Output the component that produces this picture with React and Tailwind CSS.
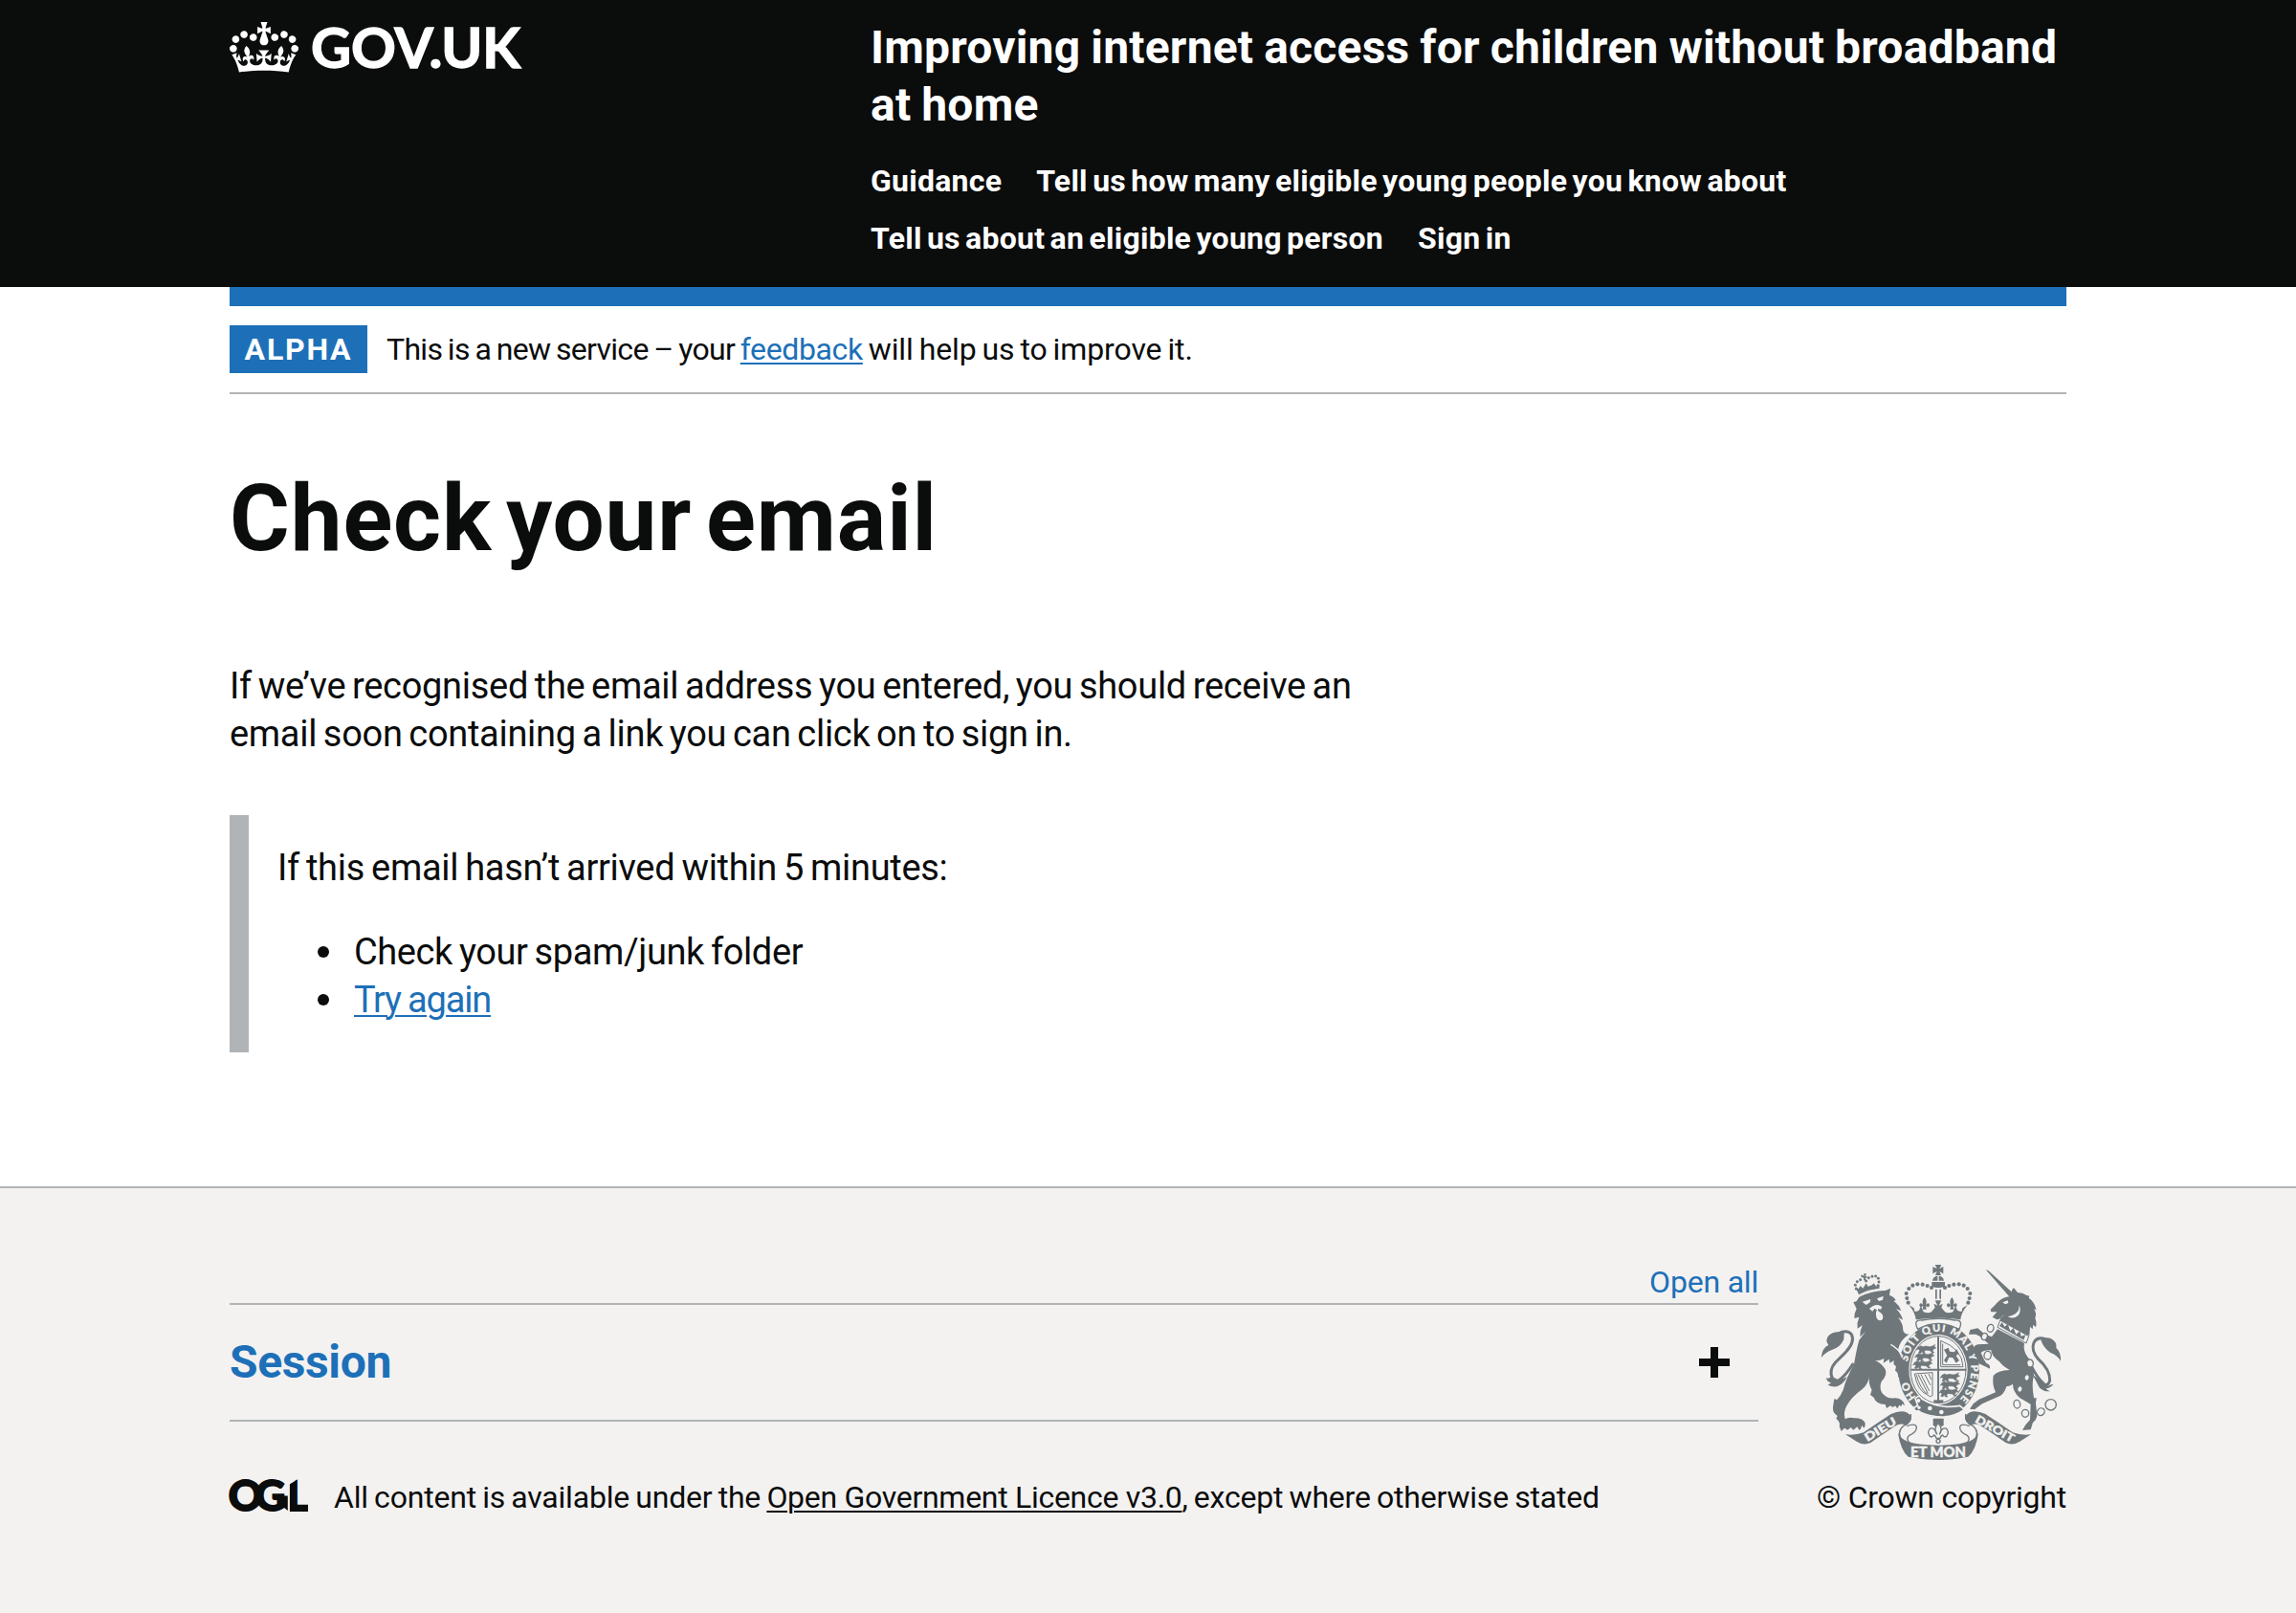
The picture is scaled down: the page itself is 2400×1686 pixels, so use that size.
import React from "react";

function Crown() {
  return (
    <svg viewBox="0 0 132 97" className="h-[53px] w-[72px] shrink-0" aria-hidden="true">
      <path
        fill="currentColor"
        fillRule="evenodd"
        d="M25 30.2c3.5 1.5 7.7-.2 9.1-3.7 1.5-3.6-.2-7.8-3.9-9.2-3.6-1.4-7.6.3-9.1 3.9-1.4 3.5.3 7.5 3.9 9zM9 39.5c3.6 1.5 7.8-.2 9.2-3.7 1.5-3.6-.2-7.8-3.9-9.1-3.6-1.5-7.6.2-9.1 3.8-1.4 3.5.3 7.5 3.8 9zM4.4 57.2c3.5 1.5 7.7-.2 9.1-3.8 1.5-3.6-.2-7.7-3.9-9.1-3.5-1.5-7.6.3-9.1 3.8-1.4 3.5.3 7.6 3.9 9.1zm38.3-21.4c3.5 1.5 7.7-.2 9.1-3.8 1.5-3.6-.2-7.7-3.9-9.1-3.6-1.5-7.6.3-9.1 3.8-1.3 3.6.4 7.7 3.9 9.1zm64.4-5.6c-3.6 1.5-7.8-.2-9.1-3.7-1.5-3.6.2-7.8 3.8-9.2 3.6-1.4 7.7.3 9.2 3.9 1.3 3.5-.4 7.5-3.9 9zm15.9 9.3c-3.6 1.5-7.7-.2-9.1-3.7-1.5-3.6.2-7.8 3.7-9.1 3.6-1.5 7.7.2 9.2 3.8 1.5 3.5-.3 7.5-3.8 9zm4.7 17.7c-3.6 1.5-7.8-.2-9.2-3.8-1.5-3.6.2-7.7 3.9-9.1 3.6-1.5 7.7.3 9.2 3.8 1.3 3.5-.4 7.6-3.9 9.1zM89.3 35.8c-3.6 1.5-7.8-.2-9.2-3.8-1.4-3.6.2-7.7 3.9-9.1 3.6-1.5 7.7.3 9.2 3.8 1.4 3.6-.3 7.7-3.9 9.1zM69.7 17.7l8.9 4.7V9.3l-8.9 2.8c-.2-.3-.5-.6-.9-.9L72.4 0H59.6l3.5 11.2c-.3.3-.6.5-.9.9l-8.8-2.8v13.1l8.8-4.7c.3.3.6.7.9.9l-5 15.4v.1c-.2.8-.4 1.6-.4 2.4 0 4.1 3.1 7.5 7 8.1h.2c.3 0 .7.1 1 .1.4 0 .7 0 1-.1h.2c4-.6 7.1-4.1 7.1-8.1 0-.8-.1-1.7-.4-2.4V34l-5.1-15.4c.4-.2.7-.6 1-.9zM66 92.8c16.9 0 32.8 1.1 47.1 3.2 4-16.9 8.9-26.7 14-33.5l-9.6-3.4c1 4.9 1.1 7.2 0 10.2-1.5-1.4-3-4.3-4.2-8.7L108.6 76c2.8-2 5-3.2 7.5-3.3-4.4 9.4-10 11.9-13.6 11.2-4.3-.8-6.3-4.6-5.6-7.9 1-4.7 5.7-5.9 8-.5 4.3-8.7-3-11.4-7.6-8.8 7.1-7.2 7.9-13.5 2.1-21.1-8 6.1-8.1 12.3-4.5 20.8-4.7-5.4-12.1-2.5-9.5 6.2 3.4-5.2 7.9-2 7.2 3.1-.6 4.3-6.4 7.8-13.5 7.2-10.3-.9-10.9-8-11.2-13.8 2.5-.5 7.1 1.8 11 7.3L80.2 60c-4.1 4.4-8 5.3-12.3 5.4 1.4-4.4 8-11.6 8-11.6H55.5s6.4 7.2 7.9 11.6c-4.2-.1-8-1-12.3-5.4l1.4 16.4c3.9-5.5 8.5-7.7 10.9-7.3-.3 5.8-.9 12.8-11.1 13.8-7.2.6-12.9-2.9-13.5-7.2-.7-5 3.8-8.3 7.1-3.1 2.7-8.7-4.6-11.6-9.4-6.2 3.7-8.5 3.6-14.7-4.6-20.8-5.8 7.6-5 13.9 2.2 21.1-4.7-2.6-11.9.1-7.7 8.8 2.3-5.5 7.1-4.2 8.1.5.7 3.3-1.3 7.1-5.7 7.9-3.5.7-9-1.8-13.5-11.2 2.5.1 4.7 1.3 7.5 3.3l-4.7-15.4c-1.2 4.4-2.7 7.2-4.3 8.7-1.1-3-.9-5.3 0-10.2l-9.5 3.4c5 6.9 9.9 16.7 14 33.5 14.8-2.1 30.8-3.2 47.7-3.2z"
      />
    </svg>
  );
}

function OglLogo() {
  return (
    <svg viewBox="0 0 82 34" className="mt-px h-[34px] w-[82px] shrink-0 overflow-visible" aria-label="OGL">
      <defs>
        <clipPath id="ogl-clip">
          <path d="M-1 -2H61.5V36H-1ZM62.8 5.6L71.8 -0.2V25H82V36H62.8Z" />
        </clipPath>
      </defs>
      <g fill="#0b0c0c">
        <text
          clipPath="url(#ogl-clip)"
          x="-1.2 26.6 60"
          y="33"
          stroke="#0b0c0c"
          strokeWidth="1.8"
          fontFamily="Lato, sans-serif"
          fontWeight="900"
          fontSize="44"
        >
          OGL
        </text>
        <path d="M47 17.5H60.8V33L56.5 29.5L52 30V24.5Z" />
      </g>
    </svg>
  );
}

const crownPearls = [
  [344, 185], [340, 171], [338, 156], [346, 141], [358, 131], [373, 127], [389, 128], [404, 132], [417, 138],
  [532, 185], [536, 171], [538, 156], [530, 141], [518, 131], [503, 127], [487, 128], [472, 132], [459, 138],
];
const lionPearls = [
  [181, 142], [178, 130], [184, 119], [194, 113], [220, 107], [231, 103], [242, 102], [250, 109], [252, 120], [249, 131], [212, 117],
];
const chainLinks = [
  [602, 265, 10, 12, 15], [583, 291, 9, 11, 20], [593, 350, 11, 13, 10], [726, 375, 10, 12, -10], [716, 420, 8, 10, 20],
  [694, 456, 8, 10, 20], [685, 503, 10, 13, -10], [711, 532, 11, 12, 0], [760, 527, 11, 12, 40], [791, 505, 17, 17, 0],
];

function HeraldicLion({ transform }) {
  return (
    <path
      transform={transform}
      d="M0 4l8-4 6 3 8-2 14 2 10-3 6-4-2 8 6 3-8 3-4 6 6 6-8-1-6-6-14-1-4 5 4 5-8 0-2-6-6 6-6-2 4-7-4-4-6 2z"
    />
  );
}

function Fleur({ transform }) {
  return <path transform={transform} d="M0-20Q10-8 4 4Q12-6 16 3Q16 11 8 11Q9 7 4 8L6 18H-6L-4 8Q-9 7-8 11Q-16 11-16 3Q-12-6-4 4Q-10-8 0-20Z" />;
}

function CoatOfArms() {
  const bg = "#f3f2f1";
  return (
    <svg viewBox="72 66 750 612" className="h-[204px] w-[250px] overflow-visible" fill="#6f777b" aria-hidden="true">
      {/* tails */}
      <g fill="none" stroke="#6f777b" strokeWidth="9" strokeLinecap="round">
        <path d="M124 282Q152 268 166 284Q178 308 148 340L116 372Q94 396 106 422Q114 436 126 428Q146 416 170 378" />
        <path d="M776 300Q748 290 738 310Q728 334 752 362Q790 396 788 430Q782 448 770 440Q750 424 728 380" />
      </g>
      <path d="M143 280Q112 270 94 289Q82 302 94 318Q74 326 71 358Q84 340 106 332Q130 326 142 300Z" />
      <path d="M104 416Q92 426 86 420Q90 434 102 436Q94 444 90 442Q112 454 128 444Q144 436 152 418L128 428Z" />
      <path d="M760 302Q780 288 796 300Q812 312 808 326Q824 342 822 368Q810 348 790 342Q768 326 760 302Z" />
      <path d="M760 430L782 446Q794 440 800 440Q790 452 776 454Q784 464 790 462Q772 466 756 452L734 410Z" />

      {/* garter and shield */}
      <ellipse cx="440" cy="397" rx="132" ry="152" fill={bg} />
      <ellipse cx="440" cy="397" rx="127" ry="147" />
      <ellipse cx="438" cy="395" rx="92" ry="110" fill={bg} />
      <ellipse cx="438" cy="395" rx="87" ry="105" fill="none" stroke="#6f777b" strokeWidth="3" />
      <path d="M435 292h6v206h-6zM352 392h174v6h-174z" />
      <path d="M424 490h30v8h-30z" />
      <g stroke="#6f777b" strokeWidth="1.5">
        <HeraldicLion transform="translate(376 320)" />
        <HeraldicLion transform="translate(370 344)" />
        <HeraldicLion transform="translate(364 368)" />
        <HeraldicLion transform="translate(450 408)" />
        <HeraldicLion transform="translate(450 432)" />
        <HeraldicLion transform="translate(446 456)" />
      </g>
      <g fill="none" stroke="#6f777b" strokeWidth="3">
        <path d="M446 304V386H516Q514 330 446 304ZM452 314V380H508" />
        <path d="M364 408L420 404V476Q412 484 404 474Q372 460 364 408ZM370 412Q380 452 404 472M384 410L410 462M396 410L414 444M376 411L406 470M408 408L416 426" />
      </g>
      <path d="M456 332L470 326L474 338L488 340L496 330L502 344L494 352L504 366L494 374L484 358L472 356L464 374L456 366L466 350Z" />
      <path id="garter-line" d="M440 517A101 121 0 0 1 440 275A101 121 0 0 1 440 517" fill="none" />
      <text dx="0 0 48" letterSpacing="3.4" fill={bg} stroke={bg} strokeWidth="0.8" fontFamily="Lato, sans-serif" fontWeight="900" fontSize="33">
        <textPath href="#garter-line" startOffset="82">HO SOIT QUI MAL Y PENSE</textPath>
      </text>
      <path d="M366 486Q380 470 386 486Q440 520 506 508L520 520Q480 548 430 542Q388 536 376 524Q362 528 362 514L374 508Z" stroke={bg} strokeWidth="5" />
      <g fill={bg}>
        <circle cx="376" cy="492" r="6" />
        <circle cx="412" cy="516" r="7" />
        <circle cx="448" cy="528" r="7" />
        <circle cx="378" cy="514" r="5" />
      </g>

      {/* lion */}
      <path d="M190 167Q232 146 272 147L288 140L285 162Q300 166 305 178L298 180Q316 192 322 211L306 204Q322 220 327 239L312 231Q328 250 328 272Q332 284 346 284Q318 302 312 332L322 356Q342 374 346 396L342 402Q348 412 342 428L334 412L328 426L320 412L313 420Q313 402 303 398L306 384Q294 380 300 366L286 374L284 362L266 374L268 360Q256 368 240 366Q262 376 272 394Q280 412 260 432Q252 452 262 468Q278 488 302 484Q328 484 333 508L324 502Q326 514 316 506L310 517L303 508Q296 516 288 508L276 516L272 504Q242 502 236 482L225 474L230 458Q218 440 222 410Q222 436 200 456Q164 482 150 510Q140 530 146 550Q156 542 176 547Q200 546 209 562Q210 572 206 578L198 570Q196 584 190 584L184 574L172 584L164 576L154 584L144 578L134 588L128 572Q132 560 118 548L122 540Q106 530 108 512L112 486L120 490Q132 478 140 458Q150 420 174 378Q182 330 190 302L210 276L193 292Q192 272 200 256L185 266Q182 248 190 230L175 234Q174 218 182 204L172 184L182 180Z" />
      <g fill={bg}>
        <path d="M200 182L226 174L224 184L212 192Z" />
        <path d="M246 172L266 164L264 176L252 180Z" />
        <path d="M222 204Q236 190 250 192L262 198L258 206L250 204Q246 210 254 214Q268 222 264 236Q254 246 245 234Q240 218 246 208L238 203L232 212Z" />
      </g>
      <path d="M289 316Q312 328 326 352" fill="none" stroke={bg} strokeWidth="4" />
      <path d="M178 134L188 142L194 132L202 140L212 124L218 134L230 130L236 124L244 134L254 128L253 142Q218 146 190 162Z" />
      <path d="M196 97L206 101L204 94L213 94L210 102L218 104L210 108L212 116L204 115L205 107L197 105Z" />
      {lionPearls.map(([x, y], i) => (
        <circle key={i} cx={x} cy={y} r="4.4" />
      ))}
      <path d="M184 163Q216 144 252 142" fill="none" stroke={bg} strokeWidth="3" />

      {/* unicorn */}
      <path d="M587 81L596 85L676 158L662 167Z" />
      <path d="M602 206Q614 196 624 184Q638 168 664 165L670 144L675 138L687 153Q704 154 714 161L724 164L722 170Q740 182 746 208L738 204Q748 218 742 234Q748 246 744 262L736 254L734 268L726 260L724 288Q680 278 630 246L634 232L648 222Q634 228 630 236L622 238L608 230L622 214L604 214Z" />
      <path d="M692 192Q694 222 656 228Q672 238 688 226Q700 212 692 192ZM640 184L656 178L658 186L648 190Z" fill={bg} />
      <path d="M632 240L722 290L714 312L624 262Z" fill={bg} stroke="#6f777b" strokeWidth="3" />
      <path d="M630 258L638 246L646 260L656 252L664 274L674 264L682 284L694 274L698 290L712 286L706 302Z" />
      <path d="M624 268L708 312Q704 334 716 352Q738 376 738 414Q730 440 738 484H746L744 500L748 540Q744 556 735 560L728 583L702 585L712 568L726 552L728 504Q706 490 694 484Q672 464 672 440Q664 446 652 448Q646 468 634 476L576 502L552 520L537 518L548 502L566 488L618 466Q606 440 611 414Q624 398 662 396Q640 384 630 370Q604 352 604 334Q582 332 572 342L582 364L590 376Q602 378 600 392L588 386L566 376L550 340Q544 320 562 316L596 314Q582 300 568 290L556 284L534 284L538 270L562 265L584 284L606 292Z" />
      {chainLinks.map(([x, y, rx, ry, a], i) => (
        <ellipse key={i} cx={x} cy={y} rx={rx} ry={ry} transform={`rotate(${a} ${x} ${y})`} fill={bg} stroke="#6f777b" strokeWidth="4" />
      ))}

      {/* royal crown */}
      <path d="M374 268Q358 238 386 240Q438 230 490 240Q518 238 504 268Q470 250 438 250Q404 250 374 268Z" fill={bg} stroke="#6f777b" strokeWidth="4" />
      {crownPearls.map(([x, y], i) => (
        <circle key={i} cx={x} cy={y} r="6.2" />
      ))}
      <path d="M428 66H448L442 78L454 72V94L442 87L447 99H429L434 87L421 94V72L434 78Z" />
      <path d="M420 116Q422 101 438 101Q454 101 456 116ZM418 120H459V134Q438 142 418 134Z" />
      <path d="M436 100h4v18h-4z" fill={bg} />
      <path d="M429 143h5v30h-5zM442 143h5v30h-5z" />
      <path d="M346 192L362 202L364 212Q378 214 380 204L384 196L392 214Q410 220 418 212L428 200L424 188L436 194L428 178H448L440 194L452 188L448 200L458 212Q466 220 484 214L492 196L496 204Q498 214 512 212L514 202L530 192Q510 216 508 238Q438 228 368 238Q366 216 346 192Z" />
      <Fleur transform="translate(395 188)" />
      <Fleur transform="translate(481 188)" />

      {/* pendant */}
      <path d="M422 548H455V570L446 574L438 562L430 574L422 570Z" />
      <g fill={bg} stroke="#6f777b" strokeWidth="4">
        <path d="M438 562Q454 580 442 598Q450 574 464 580Q474 592 464 604Q456 608 452 600Q446 602 444 610H432Q430 602 424 600Q420 608 412 604Q402 592 412 580Q426 574 434 598Q422 580 438 562Z" />
        <circle cx="438" cy="619" r="6" />
      </g>

      {/* motto ribbon */}
      <g fill={bg} stroke="#6f777b" strokeWidth="4">
        <path d="M352 534Q356 562 328 572Q306 590 326 622L348 624Q336 612 346 602Q372 590 370 574Q366 562 340 572" />
        <path d="M524 534Q520 562 548 572Q570 590 550 622L528 624Q540 612 530 602Q504 590 506 574Q510 562 536 572" />
      </g>
      <path d="M147 598Q178 602 204 592Q250 560 290 534Q334 514 354 542Q352 558 336 570Q318 560 300 574Q264 598 226 624Q204 634 182 620Z" />
      <path d="M729 598Q698 602 672 592Q626 560 586 534Q542 514 522 542Q524 558 540 570Q558 560 576 574Q612 598 650 624Q672 634 694 620Z" />
      <path d="M324 610Q350 632 438 632Q526 632 552 610L564 594Q556 648 532 668Q438 688 344 668Q320 648 312 594Z" />
      <g fill={bg} stroke={bg} strokeWidth="1.2" fontFamily="Lato, sans-serif" fontWeight="900">
        <text transform="translate(216 621) rotate(-31)" textLength="110" lengthAdjust="spacingAndGlyphs" fontSize="36">DIEU</text>
        <text transform="translate(551 559) rotate(29)" textLength="134" lengthAdjust="spacingAndGlyphs" fontSize="36">DROIT</text>
        <text x="351" y="670" textLength="174" lengthAdjust="spacingAndGlyphs" fontSize="44">ET MON</text>
      </g>
    </svg>
  );
}

const navRows = [
  ["Guidance", "Tell us how many eligible young people you know about"],
  ["Tell us about an eligible young person", "Sign in"],
];

function Header() {
  return (
    <header className="h-[300px] bg-[#0b0c0c] text-white">
      <div className="mx-auto flex w-[1920px] pt-5">
        <a className="flex w-[670px] items-start pt-[3px]">
          <Crown />
          <span className="ml-[13px] font-[Lato,sans-serif] text-[58px] leading-[51px] font-bold tracking-[-0.1px] [-webkit-text-stroke:1.4px_white]">GOV.UK</span>
        </a>
        <div className="w-[1250px] font-bold">
          <p className="text-[48px] leading-[60px] tracking-[0.2px] [word-spacing:-1.2px]">
            Improving internet access for children without broadband
            <br />
            at home
          </p>
          <nav className="mt-[19px]">
            {navRows.map((row) => (
              <div key={row[0]} className="flex gap-[36px] text-[32px] leading-[60px] tracking-[0.25px] [word-spacing:-2.9px]">
                {row.map((item) => (
                  <a key={item}>{item}</a>
                ))}
              </div>
            ))}
          </nav>
        </div>
      </div>
    </header>
  );
}

const underline = "underline decoration-2 underline-offset-[3px]";

function Main() {
  return (
    <div className="mx-auto w-[1920px]">
      <div className="h-5 bg-[#1d70b8]" />
      <div className="flex border-b-2 border-[#b1b4b6] py-5 text-[32px] leading-[50px]">
        <strong className="w-[144px] bg-[#1d70b8] text-center font-bold tracking-[1.8px] text-white">ALPHA</strong>
        <p className="ml-5 tracking-[-0.1px] whitespace-pre [word-spacing:-1.9px]">
          <span className="tracking-[-0.7px] [word-spacing:-1.6px]">This is a new service – your </span>
          <a className={`tracking-[-0.38px] text-[#1d70b8] ${underline}`}>feedback</a>
          {" will help us to improve it."}
        </p>
      </div>
      <main className="h-[828px] pt-20 text-[38px] leading-[50px]">
        <h1 className="mb-[100px] text-[96px] leading-[100px] font-bold tracking-[0.9px] [word-spacing:-10px]">Check your email</h1>
        <p className="tracking-[-0.3px] [word-spacing:-2.4px]">
          If we’ve recognised the email address you entered, you should receive an
          <br />
          email soon containing a link you can click on to sign in.
        </p>
        <div className="mt-[60px] border-l-[20px] border-[#b1b4b6] p-[30px] tracking-[-0.32px] [word-spacing:-2px]">
          <p>If this email hasn’t arrived within 5 minutes:</p>
          <ul className="mt-[38px] pl-[42px]">
            <li className="flex items-center tracking-[-0.4px]">
              <span className="mr-[26px] size-3 rounded-full bg-[#0b0c0c]" />
              Check your spam/junk folder
            </li>
            <li className="flex items-center">
              <span className="mr-[26px] size-3 rounded-full bg-[#0b0c0c]" />
              <a className={`tracking-[-1.2px] text-[#1d70b8] [word-spacing:-1px] ${underline}`}>Try again</a>
            </li>
          </ul>
        </div>
      </main>
    </div>
  );
}

function Footer() {
  return (
    <footer className="h-[446px] border-t-2 border-[#b1b4b6] bg-[#f3f2f1]">
      <div className="mx-auto flex w-[1920px] justify-between pt-[79px]">
        <div className="w-[1598px]">
          <div className="flex h-[41px] items-start justify-end">
            <button className="text-[32px] leading-[39px] tracking-[-0.2px] text-[#1d70b8]">Open all</button>
          </div>
          <div className="flex h-[124px] items-center justify-between border-y-2 border-[#b1b4b6] pr-[30px]">
            <h2 className="text-[48px] leading-[60px] font-bold tracking-[-0.36px] text-[#1d70b8]">Session</h2>
            <svg viewBox="0 0 32 32" className="size-8" fill="#0b0c0c" aria-hidden="true">
              <path d="M12 0h8v12h12v8H20v12h-8V20H0v-8h12z" />
            </svg>
          </div>
          <div className="mt-[59px] flex">
            <OglLogo />
            <p className="ml-[27px] text-[32px] leading-10 tracking-[-0.2px] whitespace-pre [word-spacing:-1.5px]">
              {"All content is available under the "}
              <a className={`tracking-[-0.29px] [word-spacing:0px] ${underline}`}>Open Government Licence v3.0</a>
              {", except where otherwise stated"}
            </p>
          </div>
        </div>
        <div className="flex w-[261px] flex-col items-center">
          <div className="mt-px mr-[2px] mb-[19px] h-[204px]">
            <CoatOfArms />
          </div>
          <p className="text-[32px] leading-10 tracking-[-0.24px] whitespace-nowrap">© Crown copyright</p>
        </div>
      </div>
    </footer>
  );
}

export default function App() {
  return (
    <div className="bg-white font-[Roboto,sans-serif] text-[#0b0c0c] antialiased">
      <Header />
      <Main />
      <Footer />
    </div>
  );
}
